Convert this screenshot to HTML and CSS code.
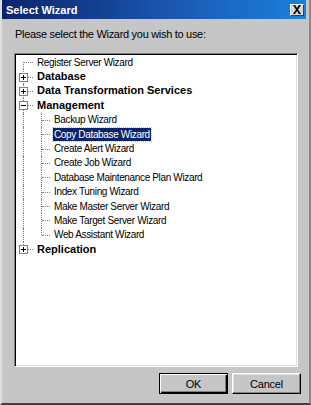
FILE: index.html
```html
<!DOCTYPE html>
<html>
<head>
<meta charset="utf-8">
<link rel="stylesheet" href="styles.css">
</head>
<body>
<div class="window">
  <div class="titlebar">
    <span class="title">Select Wizard</span>
    <span class="close"><svg width="10" height="9" viewBox="0 0 10 9"><path d="M1 0h2l2 3 2-3h2L6 4.5 9 9H7L5 6 3 9H1l3-4.5z" fill="#000"/></svg></span>
  </div>
  <div class="content">
    <div class="label">Please select the Wizard you wish to use:</div>
    <div class="tree">
      <div class="row"><span class="g g0 first"></span><span class="txt">Register Server Wizard</span></div>
      <div class="row"><span class="g g0 full"><span class="box plus"></span></span><span class="txt bold">Database</span></div>
      <div class="row"><span class="g g0 full"><span class="box plus"></span></span><span class="txt bold">Data Transformation Services</span></div>
      <div class="row"><span class="g g0 full"><span class="box minus"></span></span><span class="txt bold">Management</span></div>
      <div class="row"><span class="g pipe"></span><span class="g g1 full"></span><span class="txt">Backup Wizard</span></div>
      <div class="row"><span class="g pipe"></span><span class="g g1 full"></span><span class="txt sel">Copy Database Wizard</span></div>
      <div class="row"><span class="g pipe"></span><span class="g g1 full"></span><span class="txt">Create Alert Wizard</span></div>
      <div class="row"><span class="g pipe"></span><span class="g g1 full"></span><span class="txt">Create Job Wizard</span></div>
      <div class="row"><span class="g pipe"></span><span class="g g1 full"></span><span class="txt">Database Maintenance Plan Wizard</span></div>
      <div class="row"><span class="g pipe"></span><span class="g g1 full"></span><span class="txt">Index Tuning Wizard</span></div>
      <div class="row"><span class="g pipe"></span><span class="g g1 full"></span><span class="txt">Make Master Server Wizard</span></div>
      <div class="row"><span class="g pipe"></span><span class="g g1 full"></span><span class="txt">Make Target Server Wizard</span></div>
      <div class="row"><span class="g pipe"></span><span class="g g1 last"></span><span class="txt">Web Assistant Wizard</span></div>
      <div class="row"><span class="g g0 last"><span class="box plus"></span></span><span class="txt bold">Replication</span></div>
    </div>
    <div class="buttons">
      <button class="btn default">OK</button>
      <button class="btn">Cancel</button>
    </div>
  </div>
</div>
</body>
</html>
```
FILE: styles.css
```css
* { box-sizing: border-box; }
html, body { margin: 0; padding: 0; background: #c6c6c6; }
.window {
  width: 311px;
  height: 405px;
  background: #c6c6c6;
  border-left: 2px solid #dedede;
  border-right: 2px solid #8a8a8a;
  border-bottom: 2px solid #404040;
  display: flex;
  flex-direction: column;
  font-family: "Liberation Sans", Arial, sans-serif;
  font-size: 11px;
  color: #000;
}
.titlebar {
  height: 19px;
  margin: 0 3px 0 0;
  background: linear-gradient(to right, #0a246a 0%, #1b56b0 55%, #1a82dc 100%);
  display: flex;
  align-items: center;
  justify-content: space-between;
  padding: 0 2px 0 4px;
}
.title {
  color: #fff;
  font-weight: bold;
  font-size: 11px;
  letter-spacing: 0;
}
.close {
  width: 14px;
  height: 12px;
  background: #d4d4d4;
  border: 1px solid;
  border-color: #fff #404040 #404040 #fff;
  display: flex;
  align-items: center;
  justify-content: center;
}
.content {
  flex: 1;
  display: flex;
  flex-direction: column;
  padding: 0 0 0 12px;
}
.label {
  margin-top: 8px;
  padding-left: 1px;
  height: 14px;
  line-height: 14px;
  letter-spacing: -0.3px;
}
.tree {
  margin-top: 12px;
  width: 284px;
  height: 314px;
  background: #fff;
  border: 1px solid;
  border-color: #808080 #fff #fff #808080;
  box-shadow: inset 1px 1px 0 #000, inset -1px -1px 0 #e0e0e0;
  padding: 1px 0 0 2px;
}
.row {
  height: 14.4px;
  display: flex;
  align-items: center;
}
.g {
  position: relative;
  height: 100%;
  flex: none;
}
.g0, .pipe { width: 19px; }
.g1 { width: 17px; }
.g0::before, .pipe::before, .g1::before {
  content: "";
  position: absolute;
  left: 6px;
  top: 0;
  bottom: 0;
  border-left: 1px dotted #808080;
}
.g1::before { left: 5px; }
.first::before { top: 50%; }
.last::before { bottom: 50%; }
.g0::after, .g1::after {
  content: "";
  position: absolute;
  top: 50%;
  left: 7px;
  width: 9px;
  border-top: 1px dotted #808080;
}
.g1::after { left: 6px; width: 8px; }
.box {
  position: absolute;
  z-index: 1;
  left: 2px;
  top: 50%;
  margin-top: -4px;
  width: 9px;
  height: 9px;
  border: 1px solid #808080;
  background: #fff;
}
.box::before {
  content: "";
  position: absolute;
  left: 1px;
  top: 3px;
  width: 5px;
  height: 1px;
  background: #000;
}
.plus::after {
  content: "";
  position: absolute;
  left: 3px;
  top: 1px;
  width: 1px;
  height: 5px;
  background: #000;
}
.txt {
  white-space: nowrap;
  line-height: 13px;
  padding: 0 1px;
  font-size: 10px;
  letter-spacing: -0.35px;
}
.bold {
  font-weight: bold;
  font-size: 11px;
  letter-spacing: 0;
}
.sel {
  background: #0a246a;
  color: #fff;
  outline: 1px dotted #c0c0c0;
}
.buttons {
  margin-top: 6px;
  display: flex;
  justify-content: flex-end;
  gap: 4px;
  padding-right: 8px;
}
.btn {
  width: 69px;
  height: 21px;
  font-family: "Liberation Sans", Arial, sans-serif;
  font-size: 11px;
  background: #c6c6c6;
  color: #000;
  border: 1px solid;
  border-color: #fff #000 #000 #fff;
  box-shadow: inset -1px -1px 0 #808080, inset 1px 1px 0 #e4e4e4;
  padding: 0;
  letter-spacing: -0.2px;
}
.default {
  border-color: #000;
  box-shadow: inset 1px 1px 0 #fff, inset -1px -1px 0 #000, inset -2px -2px 0 #808080;
}
```
